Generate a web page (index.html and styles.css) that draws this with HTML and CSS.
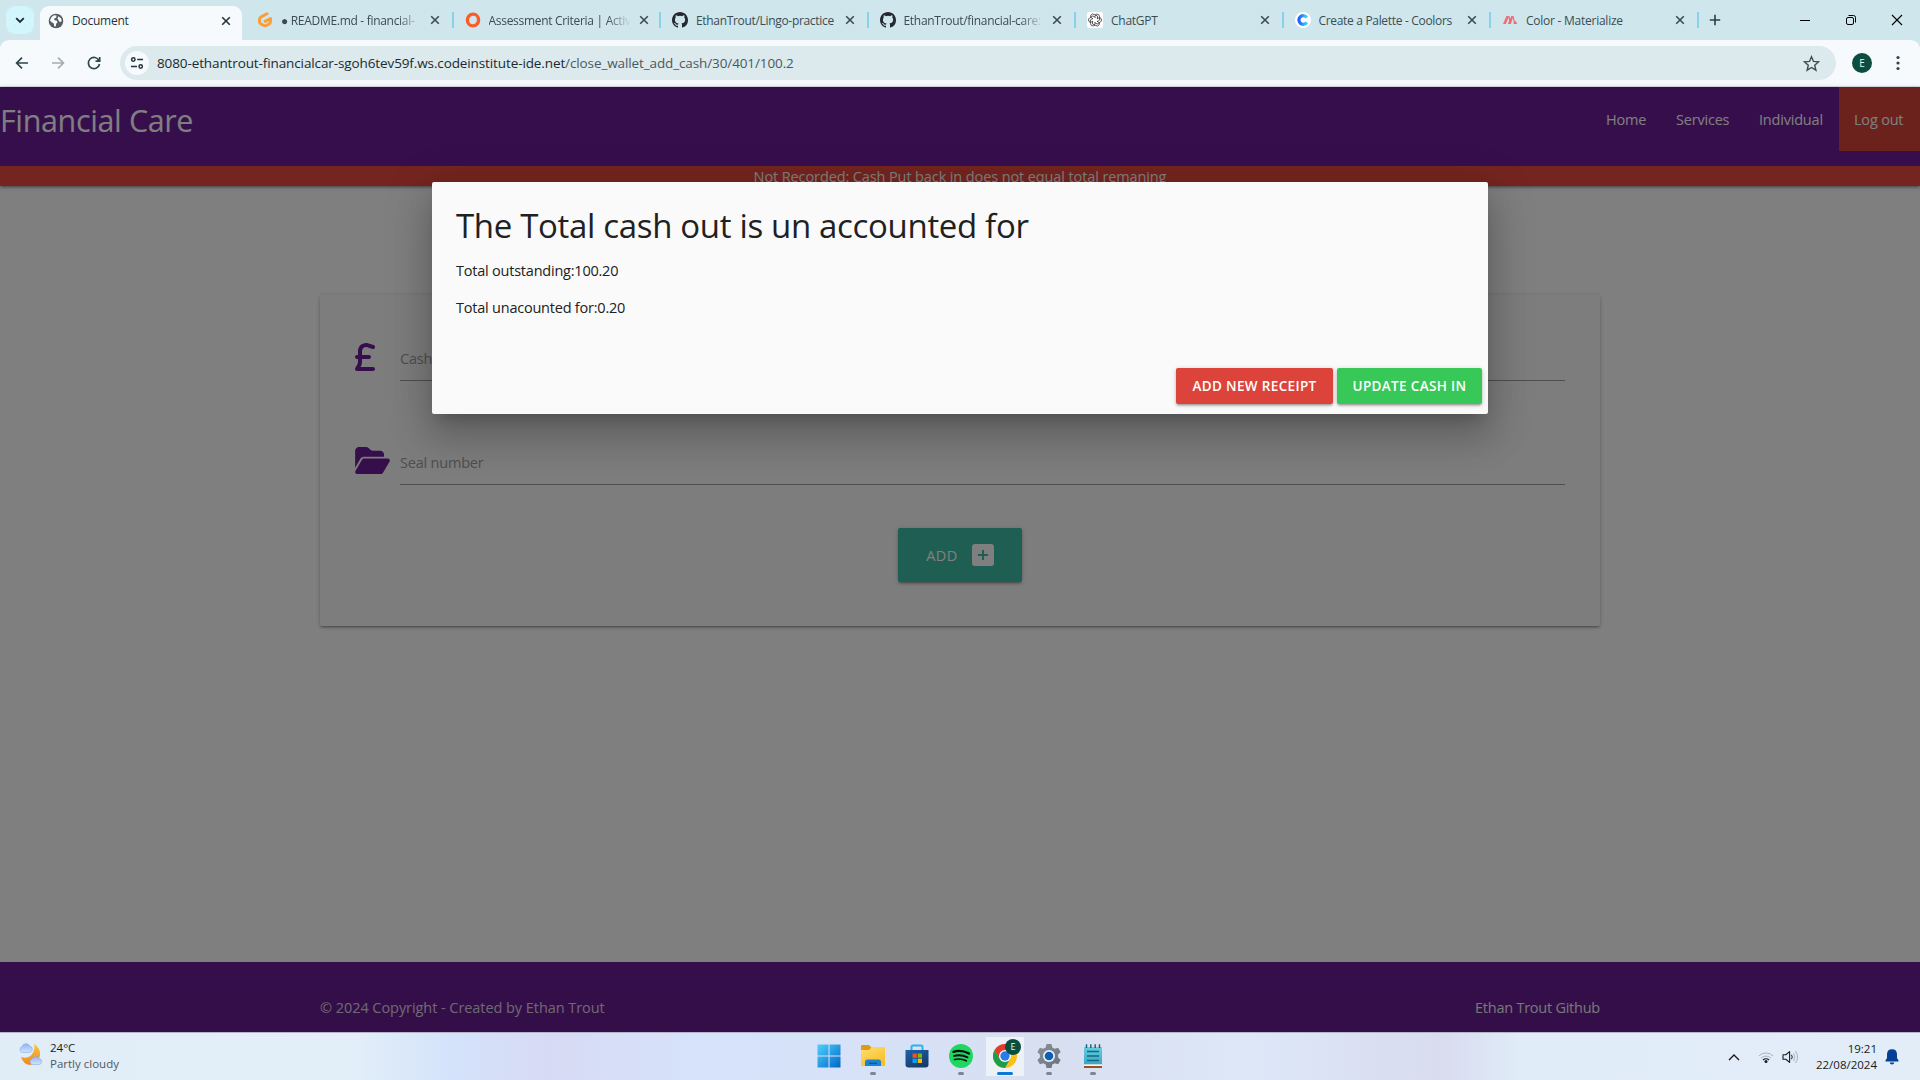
FILE: index.html
```html
<!DOCTYPE html>
<html lang="en">
<head>
<meta charset="utf-8">
<title>Document</title>
<link rel="stylesheet" href="styles.css">
</head>
<body>
<svg class="defs" width="0" height="0">
  <defs>
    <linearGradient id="win" x1="0" y1="0" x2="1" y2="1"><stop offset="0" stop-color="#4fd0fb"/><stop offset="1" stop-color="#0067c8"/></linearGradient>
    <linearGradient id="fold" x1="0" y1="0" x2="0.6" y2="1"><stop offset="0" stop-color="#ffdf72"/><stop offset="1" stop-color="#f9bd27"/></linearGradient>
    <linearGradient id="store" x1="0" y1="0" x2="0.6" y2="1"><stop offset="0" stop-color="#1c62ae"/><stop offset="1" stop-color="#173c69"/></linearGradient>
    <linearGradient id="moon" x1="0" y1="0" x2="0" y2="1"><stop offset="0" stop-color="#f8c546"/><stop offset="1" stop-color="#f0871e"/></linearGradient>
    <linearGradient id="cloud" x1="0" y1="0" x2="0" y2="1"><stop offset="0" stop-color="#8db3f2"/><stop offset="1" stop-color="#d3e3fb"/></linearGradient>
    <linearGradient id="cool" x1="0" y1="0" x2="1" y2="0"><stop offset="0" stop-color="#245bff"/><stop offset="1" stop-color="#3bd5f5"/></linearGradient>
    <linearGradient id="gear" x1="0" y1="0" x2="1" y2="1"><stop offset="0" stop-color="#8a929b"/><stop offset="1" stop-color="#69717a"/></linearGradient>
    <linearGradient id="note" x1="0" y1="0" x2="0" y2="1"><stop offset="0" stop-color="#63cfe0"/><stop offset="1" stop-color="#3ba6c4"/></linearGradient>
    <symbol id="x" viewBox="0 0 10 10"><path d="M1.2 1.2l7.6 7.6M8.8 1.2L1.2 8.8" stroke="currentColor" stroke-width="1.6" fill="none"/></symbol>
    <symbol id="github" viewBox="0 0 16 16"><path fill="#24292f" d="M8 0C3.58 0 0 3.58 0 8c0 3.54 2.29 6.53 5.47 7.59.4.07.55-.17.55-.38 0-.19-.01-.82-.01-1.49-2.01.37-2.53-.49-2.69-.94-.09-.23-.48-.94-.82-1.13-.28-.15-.68-.52-.01-.53.63-.01 1.08.58 1.23.82.72 1.21 1.87.87 2.33.66.07-.52.28-.87.51-1.07-1.78-.2-3.64-.89-3.64-3.95 0-.87.31-1.59.82-2.15-.08-.2-.36-1.02.08-2.12 0 0 .67-.21 2.2.82a7.6 7.6 0 0 1 4 0c1.53-1.04 2.2-.82 2.2-.82.44 1.1.16 1.92.08 2.12.51.56.82 1.27.82 2.15 0 3.07-1.87 3.75-3.65 3.95.29.25.54.73.54 1.48 0 1.07-.01 1.93-.01 2.2 0 .21.15.46.55.38A8 8 0 0 0 16 8c0-4.42-3.58-8-8-8z"/></symbol>
  </defs>
</svg>

<header class="chrome">
  <div class="tabstrip">
    <div class="tab-search"><svg width="12" height="12" viewBox="0 0 12 12"><path d="M2.2 4.2L6 8l3.8-3.8" fill="none" stroke="#1c2b30" stroke-width="1.8"/></svg></div>
    <div class="tab tab-active">
      <svg class="fav" viewBox="0 0 16 16"><circle cx="8" cy="8" r="7.300" fill="#575c60"/><path d="M2 7.400C2.600 5 4 3 6.200 2.200L8.600 2.600 8.200 4.600 6.400 5.600 6.200 7.200 8.600 7.600 9.600 9.400 8.200 10.600 7.800 13.600 6.200 13.200 5.800 10.400 3.400 9z" fill="#f6fafd"/><path d="M10.400 3.200L13 5.200 13.800 8 12 9.200 10.600 7.600 9.600 5.400z" fill="#f6fafd"/></svg>
      <span class="tab-title">Document</span><svg class="close" viewBox="0 0 10 10"><use href="#x"/></svg>
    </div>
    <div class="tab"><svg class="fav" viewBox="0 0 16 16"><path d="M10 1.800L4.200 4.900Q2.500 5.800 2.500 7.500V9.600Q2.500 11.200 4 12L6.800 13.500Q8 14.100 9.200 13.500L12 12Q13.500 11.200 13.500 9.600V6.600L8.200 9.400" fill="none" stroke="#fb9e38" stroke-width="3" stroke-linejoin="round" stroke-linecap="round"/></svg><span class="tab-title fade">● README.md - financial-</span><svg class="close" viewBox="0 0 10 10"><use href="#x"/></svg></div>
    <div class="tab"><svg class="fav" viewBox="0 0 16 16"><ellipse cx="8" cy="8" rx="5.600" ry="5.900" fill="none" stroke="#fc5b27" stroke-width="3.400"/></svg><span class="tab-title fade">Assessment Criteria | Activ</span><svg class="close" viewBox="0 0 10 10"><use href="#x"/></svg></div>
    <div class="tab"><svg class="fav" viewBox="0 0 16 16"><use href="#github"/></svg><span class="tab-title long">EthanTrout/Lingo-practice</span><svg class="close" viewBox="0 0 10 10"><use href="#x"/></svg></div>
    <div class="tab"><svg class="fav" viewBox="0 0 16 16"><use href="#github"/></svg><span class="tab-title fade">EthanTrout/financial-care:</span><svg class="close" viewBox="0 0 10 10"><use href="#x"/></svg></div>
    <div class="tab"><svg class="fav" viewBox="0 0 16 16"><rect width="16" height="16" rx="2" fill="#fff"/><g fill="none" stroke="#333" stroke-width=".75"><path id="petal" d="M8 5.700V4.200Q8 2.200 10 2Q12.600 2.200 12.600 4.800V8.200L10 9.600"/><use href="#petal" transform="rotate(60 8 8)"/><use href="#petal" transform="rotate(120 8 8)"/><use href="#petal" transform="rotate(180 8 8)"/><use href="#petal" transform="rotate(240 8 8)"/><use href="#petal" transform="rotate(300 8 8)"/></g></svg><span class="tab-title">ChatGPT</span><svg class="close" viewBox="0 0 10 10"><use href="#x"/></svg></div>
    <div class="tab"><svg class="fav" viewBox="0 0 16 16"><circle cx="8" cy="8" r="8" fill="#fff"/><path d="M11.800 5.600A4.300 4.300 0 1 0 11.800 10.400" fill="none" stroke="url(#cool)" stroke-width="3.200"/></svg><span class="tab-title long">Create a Palette - Coolors</span><svg class="close" viewBox="0 0 10 10"><use href="#x"/></svg></div>
    <div class="tab"><svg class="fav" viewBox="0 0 16 16"><path d="M1 12L4.500 4H7.300L3.800 12zM5.800 12L9.300 4H11.400L8.900 12zM11.400 12L12.600 8.400Q14.600 9 15.200 12z" fill="#ee6e73"/><path d="M7 4.300L8.200 11M11.200 4.300L12.400 11" stroke="#ee6e73" stroke-width="1.200"/></svg><span class="tab-title">Color - Materialize</span><svg class="close" viewBox="0 0 10 10"><use href="#x"/></svg></div>
    <svg class="newtab" width="12" height="12" viewBox="0 0 12 12"><path d="M6 .8v10.400M.8 6h10.400" stroke="#2b4147" stroke-width="1.600"/></svg>
    <div class="window-buttons">
      <svg width="46" height="40" viewBox="0 0 46 40"><path d="M18 20.500h10" stroke="#000"/></svg>
      <svg width="46" height="40" viewBox="0 0 46 40"><g fill="none" stroke="#000"><rect x="18.500" y="17.500" width="7" height="7" rx="1.500"/><path d="M20.500 15.500H25.500Q27.500 15.500 27.500 17.500V22.500"/></g></svg>
      <svg width="46" height="40" viewBox="0 0 46 40"><path d="M18 15l10 10M28 15L18 25" stroke="#000" stroke-width="1.100"/></svg>
    </div>
  </div>
  <div class="toolbar">
    <svg class="tool" viewBox="0 0 16 16"><path d="M14 8H3M8 2.600L2.600 8 8 13.400" fill="none" stroke="#2f464c" stroke-width="1.700"/></svg>
    <svg class="tool" viewBox="0 0 16 16"><path d="M2 8h11M8 2.600L13.400 8 8 13.400" fill="none" stroke="#a5adb1" stroke-width="1.700"/></svg>
    <svg class="tool" viewBox="0 0 16 16"><path d="M13 5.500A5.600 5.600 0 1 0 13.500 9M13.700 2v4.200H9.500" fill="none" stroke="#2f464c" stroke-width="1.700"/></svg>
    <div class="omnibox">
      <span class="site-info"><svg width="14" height="14" viewBox="0 0 14 14"><g fill="none" stroke="#24343a" stroke-width="1.500"><circle cx="3.300" cy="3.500" r="1.700"/><path d="M7.200 3.500H13M1 10.500H7"/><circle cx="10.700" cy="10.500" r="1.700"/></g></svg></span>
      <span class="url"><span class="host">8080-ethantrout-financialcar-sgoh6tev59f.ws.codeinstitute-ide.net</span>/close_wallet_add_cash/30/401/100.2</span>
      <svg class="star" width="17" height="17" viewBox="0 0 17 17"><path d="M8.500 1.700l2 4.700 5.100.4-3.900 3.400 1.200 5-4.400-2.700-4.400 2.700 1.200-5L1.400 6.800l5.100-.4z" fill="none" stroke="#3c4f56" stroke-width="1.400"/></svg>
    </div>
    <span class="avatar">E</span>
    <svg class="dots" width="4" height="16" viewBox="0 0 4 16" fill="#2f464c"><circle cx="2" cy="2.500" r="1.600"/><circle cx="2" cy="8" r="1.600"/><circle cx="2" cy="13.500" r="1.600"/></svg>
  </div>
</header>

<div class="page">
  <div class="head">
    <nav>
      <a class="brand">Financial Care</a>
      <ul><li class="l-home">Home</li><li class="l-serv">Services</li><li class="l-ind">Individual</li><li class="logout">Log out</li></ul>
    </nav>
    <p class="flash"><span>Not Recorded: Cash Put back in does not equal total remaning</span></p>
  </div>
  <main>
    <form class="card">
      <div class="field">
        <svg width="20" height="28" viewBox="0 0 320 448"><path transform="translate(0 -32)" fill="#6c1c98" d="M112 160.400c0-35.500 28.800-64.400 64.400-64.400c6.900 0 13.800 1.100 20.400 3.300l81.200 27.100c16.800 5.600 34.900-3.500 40.500-20.200s-3.500-34.900-20.200-40.500L217 38.600c-13.100-4.400-26.800-6.600-40.600-6.600C105.500 32 48 89.500 48 160.400V224H32c-17.700 0-32 14.300-32 32s14.300 32 32 32h16v44.500c0 17.400-4.700 34.500-13.700 49.400L4.600 431.500c-5.900 9.900-6.100 22.200-.4 32.200S20.500 480 32 480h256c17.700 0 32-14.300 32-32s-14.300-32-32-32H88.500l.7-1.100C104.100 390 112 361.500 112 332.500V288h112c17.700 0 32-14.300 32-32s-14.300-32-32-32H112v-63.600z"/></svg>
        <label>Cash</label>
      </div>
      <div class="field">
        <svg width="35" height="27" viewBox="0 0 576 448"><path transform="translate(0 -32)" fill="#6c1c98" d="M88.700 223.800L0 375.800V96C0 60.700 28.700 32 64 32h117.500c17 0 33.300 6.700 45.300 18.700l26.500 26.500c12 12 28.300 18.700 45.300 18.700H416c35.300 0 64 28.700 64 64v32H144c-22.800 0-43.800 12.100-55.300 31.800zm27.600 16.100C122.100 230 132.600 224 144 224h400c11.500 0 22 6.100 27.700 16.100s5.700 22.200-.1 32.100l-112 192C453.900 473.900 443.400 480 432 480H32c-11.500 0-22-6.100-27.700-16.100s-5.700-22.200.1-32.100l112-192z"/></svg>
        <label>Seal number</label>
      </div>
      <div class="add">ADD<svg width="22" height="22" viewBox="0 0 22 22"><rect width="22" height="22" rx="3" fill="#fff"/><path d="M11 6v10M6 11h10" stroke="#3ebea6" stroke-width="2"/></svg></div>
    </form>
  </main>
  <footer><div class="copyright"><span class="c-left">© 2024 Copyright - Created by Ethan Trout</span><span class="c-right">Ethan Trout Github</span></div></footer>
  <div class="overlay">
    <section class="modal">
      <h4>The Total cash out is un accounted for</h4>
      <p>Total outstanding:100.20</p>
      <p>Total unacounted for:0.20</p>
      <div class="actions"><span class="btn red">ADD NEW RECEIPT</span><span class="btn green">UPDATE CASH IN</span></div>
    </section>
  </div>
</div>

<div class="taskbar">
  <div class="weather">
    <svg width="26" height="24" viewBox="0 0 26 24"><path d="M16 2Q23 6 22 14Q19 22 12 23Q5 22 3 15Q10 17 13.500 13Q17.500 8 16 2z" fill="url(#moon)"/><path d="M4 10.500a3.200 3.200 0 0 1 0-6a4.200 4.200 0 0 1 7.800-.4a3.300 3.300 0 0 1 .2 6.400z" fill="url(#cloud)" stroke="#7ba5ec" stroke-width=".5"/><path d="M14 22.500a3 3 0 0 1 0-5.600a4 4 0 0 1 7.200-.4a3.100 3.100 0 0 1 .3 6z" fill="url(#cloud)" stroke="#7ba5ec" stroke-width=".5"/></svg>
    <div><div class="temp">24°C</div><div class="sky">Partly cloudy</div></div>
  </div>
  <div class="apps">
    <div class="app"><svg viewBox="0 0 24 24"><path d="M.5.500h11v11H.5zM12.500.500h11v11h-11zM.5 12.500h11v11H.5zM12.500 12.500h11v11h-11z" fill="url(#win)"/></svg></div>
    <div class="app run"><svg viewBox="0 0 24 24"><path d="M0 2Q0 1 1 1H8L10.500 3.500V8H0z" fill="#e09b12"/><path d="M0 6H8L11 3H23Q24 3 24 4V22H0z" fill="url(#fold)"/><path d="M4 22V18Q4 15.500 6.500 15.500H17.500Q20 15.500 20 18V22z" fill="#1983d2"/><path d="M8 19.300h8" stroke="#0a5796" stroke-width="1.300"/></svg></div>
    <div class="app"><svg viewBox="0 0 24 24"><path d="M6.500 7V3Q6.500 1.500 8 1.500H16Q17.500 1.500 17.500 3V7" fill="none" stroke="#26b4ee" stroke-width="2"/><path d="M.5 6H23.500V20.500Q23.500 23.500 20.500 23.500H3.500Q.5 23.500.5 20.500z" fill="url(#store)"/><path d="M7.500 9.500h4.300v4.300H7.500z" fill="#f25022"/><path d="M12.700 9.500H17v4.300h-4.300z" fill="#7fba00"/><path d="M7.500 14.700h4.300V19H7.500z" fill="#00a4ef"/><path d="M12.700 14.700H17V19h-4.300z" fill="#ffb900"/></svg></div>
    <div class="app run"><svg viewBox="0 0 24 24"><circle cx="12" cy="12" r="12" fill="#1ed760"/><g fill="none" stroke="#0b0b0b" stroke-linecap="round"><path d="M4.500 7.800Q12 5.500 20 9.500" stroke-width="2.300"/><path d="M5 11.900Q12 10 18.500 13.300" stroke-width="1.900"/><path d="M5.500 15.500Q12 14 17.300 16.800" stroke-width="1.600"/></g></svg></div>
    <div class="app active"><svg viewBox="0 0 24 24"><circle cx="12" cy="12" r="12" fill="#fbc116"/><path d="M1.600 6A12 12 0 0 1 22.400 6H12L6.800 15z" fill="#e33b2e"/><path d="M1.600 6A12 12 0 0 0 12 24L17.200 15L6.800 15z" fill="#1e9e4a"/><circle cx="12" cy="12" r="6" fill="#fff"/><circle cx="12" cy="12" r="4.700" fill="#2a7de9"/></svg><span class="badge">E</span></div>
    <div class="app run"><svg viewBox="0 0 24 24"><path d="M9.500 0h5l.8 3.400 2.500 1.400 3.300-1.100L23.600 8l-2.500 2.500v3l2.500 2.500-2.500 4.300-3.300-1.100-2.500 1.400-.8 3.400h-5l-.8-3.400-2.500-1.400-3.300 1.100L.4 16l2.500-2.500v-3L.4 8l2.500-4.300 3.300 1.100 2.500-1.400z" fill="url(#gear)"/><circle cx="12" cy="12" r="6" fill="#edf1f7"/><circle cx="12" cy="12" r="4.300" fill="#0b60b6"/></svg></div>
    <div class="app run"><svg viewBox="0 0 24 24"><path d="M3 22H21V24H3z" fill="#a34d1a"/><path d="M3 3H21V20.500H3z" fill="url(#note)"/><path d="M3 20.500H21V22H3z" fill="#eef4f8"/><path d="M5.500.200V4M9.800.200V4M14.200.200V4M18.500.200V4" stroke="#145f78" stroke-width="1.400"/><path d="M6 7.500h12M6 12h12M6 16.500h12" stroke="#13677f" stroke-width="1.600"/></svg></div>
  </div>
  <div class="tray">
    <svg class="chev" width="12" height="8" viewBox="0 0 12 8"><path d="M1 7l5-5 5 5" fill="none" stroke="#1a1a1a" stroke-width="1.400"/></svg>
    <svg class="wifi" width="16" height="14" viewBox="0 0 16 14"><path d="M.8 6A10 10 0 0 1 15.200 6M3 8.200A7 7 0 0 1 13 8.200" fill="none" stroke="#aab4bd"/><path d="M5 10A4.300 4.300 0 0 1 11 10" fill="none" stroke="#1a1a1a" stroke-width="1.200"/><circle cx="8" cy="11.500" r="1.500" fill="#1a1a1a"/></svg>
    <svg class="vol" width="17" height="14" viewBox="0 0 17 14"><path d="M1 4.700H3.800L7.600 1.600V12.400L3.800 9.300H1z" fill="none" stroke="#1a1a1a" stroke-width="1.100" stroke-linejoin="round"/><path d="M9.500 4.800Q11 7 9.500 9.200" fill="none" stroke="#1a1a1a"/><path d="M11.600 3Q14 7 11.600 11M13.600 1Q17.500 7 13.600 13" fill="none" stroke="#aab4bd"/></svg>
    <div class="clock"><div>19:21</div><div>22/08/2024</div></div>
    <svg class="bell" width="14" height="16" viewBox="0 0 14 16"><path d="M7 .3Q12 .3 12 5.500V9L13.500 11.500V12.500H.5V11.500L2 9V5.500Q2 .3 7 .3zM4.700 13.500H9.300Q9 15.500 7 15.500T4.700 13.500z" fill="#043f93"/></svg>
  </div>
</div>
</body>
</html>
```
FILE: styles.css
```css
* { box-sizing: border-box; }
body {
  margin: 0; width: 1920px; height: 1080px; overflow: hidden;
  display: flex; flex-direction: column;
  font-family: "Open Sans", "Noto Sans", sans-serif; font-size: 14.5px;
}
svg { display: block; flex: none; }
.defs { position: absolute; }
span, li, p, h4, a, label { white-space: nowrap; }

/* browser window */
.chrome { height: 87px; background: #cfe6ec; flex: none; }
.tabstrip { height: 40px; display: flex; align-items: center; padding-left: 6px; }
.tab-search { width: 28px; height: 28px; border-radius: 9px; background: #d3f5fc; display: flex; align-items: center; justify-content: center; margin-right: 6px; }
.tab { flex: none; width: 207.5px; height: 16px; display: flex; align-items: center; padding: 0 12px 0 11px; border-right: 2px solid #84d3e6; color: #3b4d52; font-size: 12px; letter-spacing: -.25px; }
.tab-active { width: 202px; height: 34px; align-self: flex-end; background: #f6fafd; border: 0; border-radius: 9px 9px 0 0; padding: 0 11px 5px 8px; margin-right: 4px; color: #24343a; }
.fav { width: 16px; height: 16px; margin-right: 8px; }
.tab-title { flex: 1; margin-right: 8px; line-height: 18px; padding-top: 1px; }
.long { letter-spacing: -.32px; }
.fade { letter-spacing: -.3px; -webkit-mask-image: linear-gradient(90deg, #000 calc(100% - 24px), transparent); mask-image: linear-gradient(90deg, #000 calc(100% - 24px), transparent); }
.close { width: 10px; height: 10px; }
.newtab { margin-left: 10px; }
.window-buttons { display: flex; margin-left: auto; }
.toolbar { height: 47px; background: #f6fafd; border-bottom: 1px solid #d6dee2; border-radius: 9px 9px 0 0; display: flex; align-items: center; padding: 0 20px 0 14px; }
.tool { width: 16px; height: 16px; margin-right: 20px; }
.omnibox { width: 1716px; height: 34px; margin-left: -2px; background: #dce9ed; border-radius: 17px; display: flex; align-items: center; padding: 0 16px 0 5px; }
.site-info { width: 24px; height: 24px; border-radius: 12px; background: #f6fafd; display: flex; align-items: center; justify-content: center; }
.url { margin-left: 8px; color: #4a595e; font-size: 13.5px; letter-spacing: -.11px; }
.host { color: #1b2a2f; }
.star { margin-left: auto; }
.avatar { width: 20px; height: 20px; border-radius: 10px; margin-left: 16px; background: #0d4c40; color: #dfe; font-size: 10px; line-height: 20px; text-align: center; }
.dots { margin-left: 24px; }

/* application page */
.page { height: 945px; position: relative; display: flex; flex-direction: column; background: #fff; flex: none; }
.head { flex: none; box-shadow: 0 2px 2px rgba(0,0,0,.14), 0 3px 1px -2px rgba(0,0,0,.12), 0 1px 5px rgba(0,0,0,.2); }
nav { height: 79px; background: #6c1c98; display: flex; justify-content: space-between; color: #fff; }
.brand { font-size: 30.5px; line-height: 64px; letter-spacing: -.38px; padding-top: 1px; }
nav ul { margin: 0; padding: 0; list-style: none; display: flex; line-height: 66px; }
nav li { height: 64px; padding: 0 15px; letter-spacing: -.2px; }
.l-home { width: 70px; }
.l-serv { width: 83px; }
.l-ind { width: 95px; }
.logout { width: 81px; background: #d64238; }
.flash { height: 20px; margin: 0; background: #ea4a3e; color: #fff; line-height: 21px; text-align: center; letter-spacing: -.11px; }
main { flex: 1; padding: 109px 320px 0; }
.card { height: 331px; background: #fafafa; border-radius: 2px; padding: 33px 35px 0; box-shadow: 0 2px 2px rgba(0,0,0,.14), 0 3px 1px -2px rgba(0,0,0,.12), 0 1px 5px rgba(0,0,0,.2); }
.field { height: 104px; display: grid; grid-template-columns: 45px 1fr; align-items: start; }
.field svg { margin-top: 15px; }
.field label { height: 53px; border-bottom: 1px solid #9e9e9e; color: #9e9e9e; line-height: 61px; letter-spacing: -.2px; }
.add { width: 124px; height: 54px; margin: -8px auto 0; display: flex; align-items: center; justify-content: center; gap: 14px; background: #3ebea6; color: #fff; border-radius: 2px; letter-spacing: .5px; box-shadow: 0 2px 2px rgba(0,0,0,.14), 0 3px 1px -2px rgba(0,0,0,.12), 0 1px 5px rgba(0,0,0,.2); }
footer { height: 70px; padding-top: 20px; background: #6c1c98; }
.copyright { height: 50px; padding: 0 320px; background: rgba(51,51,51,.08); display: flex; justify-content: space-between; line-height: 52px; color: rgba(255,255,255,.8); letter-spacing: -.06px; }
.c-right { color: #eee; letter-spacing: -.24px; }

/* dialog layered on the dimmed page */
.overlay { position: absolute; inset: 0; background: rgba(0,0,0,.5); overflow: hidden; }
.modal { width: 1056px; height: 232px; margin: 95px auto 0; padding: 24px 6px 0 24px; background: #fafafa; border-radius: 2px; color: #212121; box-shadow: 0 24px 38px 3px rgba(0,0,0,.14), 0 9px 46px 8px rgba(0,0,0,.12), 0 11px 15px -7px rgba(0,0,0,.2); }
.modal h4 { margin: 0 0 14px; font-weight: 400; font-size: 33px; line-height: 40px; letter-spacing: -.33px; }
.modal p { margin: 0 0 15px; line-height: 22px; letter-spacing: -.22px; }
.actions { display: flex; justify-content: flex-end; gap: 4px; margin-top: 49px; }
.btn { height: 36px; line-height: 36px; border-radius: 2px; color: #fff; text-align: center; font-size: 13.5px; font-weight: 600; letter-spacing: .35px; box-shadow: 0 2px 2px rgba(0,0,0,.14), 0 3px 1px -2px rgba(0,0,0,.12), 0 1px 5px rgba(0,0,0,.2); }
.red { width: 157px; background: #dc433b; }
.green { width: 145px; background: #37c857; }

/* desktop taskbar */
.taskbar { height: 48px; flex: none; border-top: 1px solid #b3b6c9; display: grid; grid-template-columns: 807px 308px 805px; background: linear-gradient(90deg, #e0edf7 0, #e3eff8 350px, #d4e3fb 450px, #d7daf4 550px, #d6e3fa 690px, #d7e2f8 850px, #d8dff0 1060px, #dde7f8 1250px, #d8dcee 1440px, #e0ecf8 1520px, #e2edf8 1920px); }
.weather { display: flex; padding: 9px 0 0 18px; gap: 6px; font-size: 11.5px; line-height: 16px; }
.temp { color: #1a1a1a; margin-top: -2px; }
.sky { color: #52585e; }
.apps { display: flex; }
.app { width: 44px; height: 47px; position: relative; display: flex; flex-direction: column; align-items: center; padding-top: 11px; }
.app svg { width: 24px; height: 24px; }
.run::after, .active::after { content: ""; width: 6px; height: 3px; border-radius: 2px; background: #80858e; margin-top: 4px; }
.active::after { width: 16px; background: #0a78d4; }
.active { background: linear-gradient(#edf1fa, #edf1fa) 3px 4px / 38px 39px no-repeat; }
.badge { position: absolute; left: 22px; top: 6px; width: 16px; height: 16px; border-radius: 8px; background: #075040; color: #dfe; font-size: 9px; line-height: 16px; text-align: center; }
.tray { display: flex; align-items: center; justify-content: flex-end; padding-right: 21px; font-size: 11.5px; line-height: 16px; color: #1a1a1a; }
.chev { margin-right: 18px; }
.wifi { margin-right: 8px; }
.clock { width: 78px; text-align: right; margin-right: 8px; }
```
